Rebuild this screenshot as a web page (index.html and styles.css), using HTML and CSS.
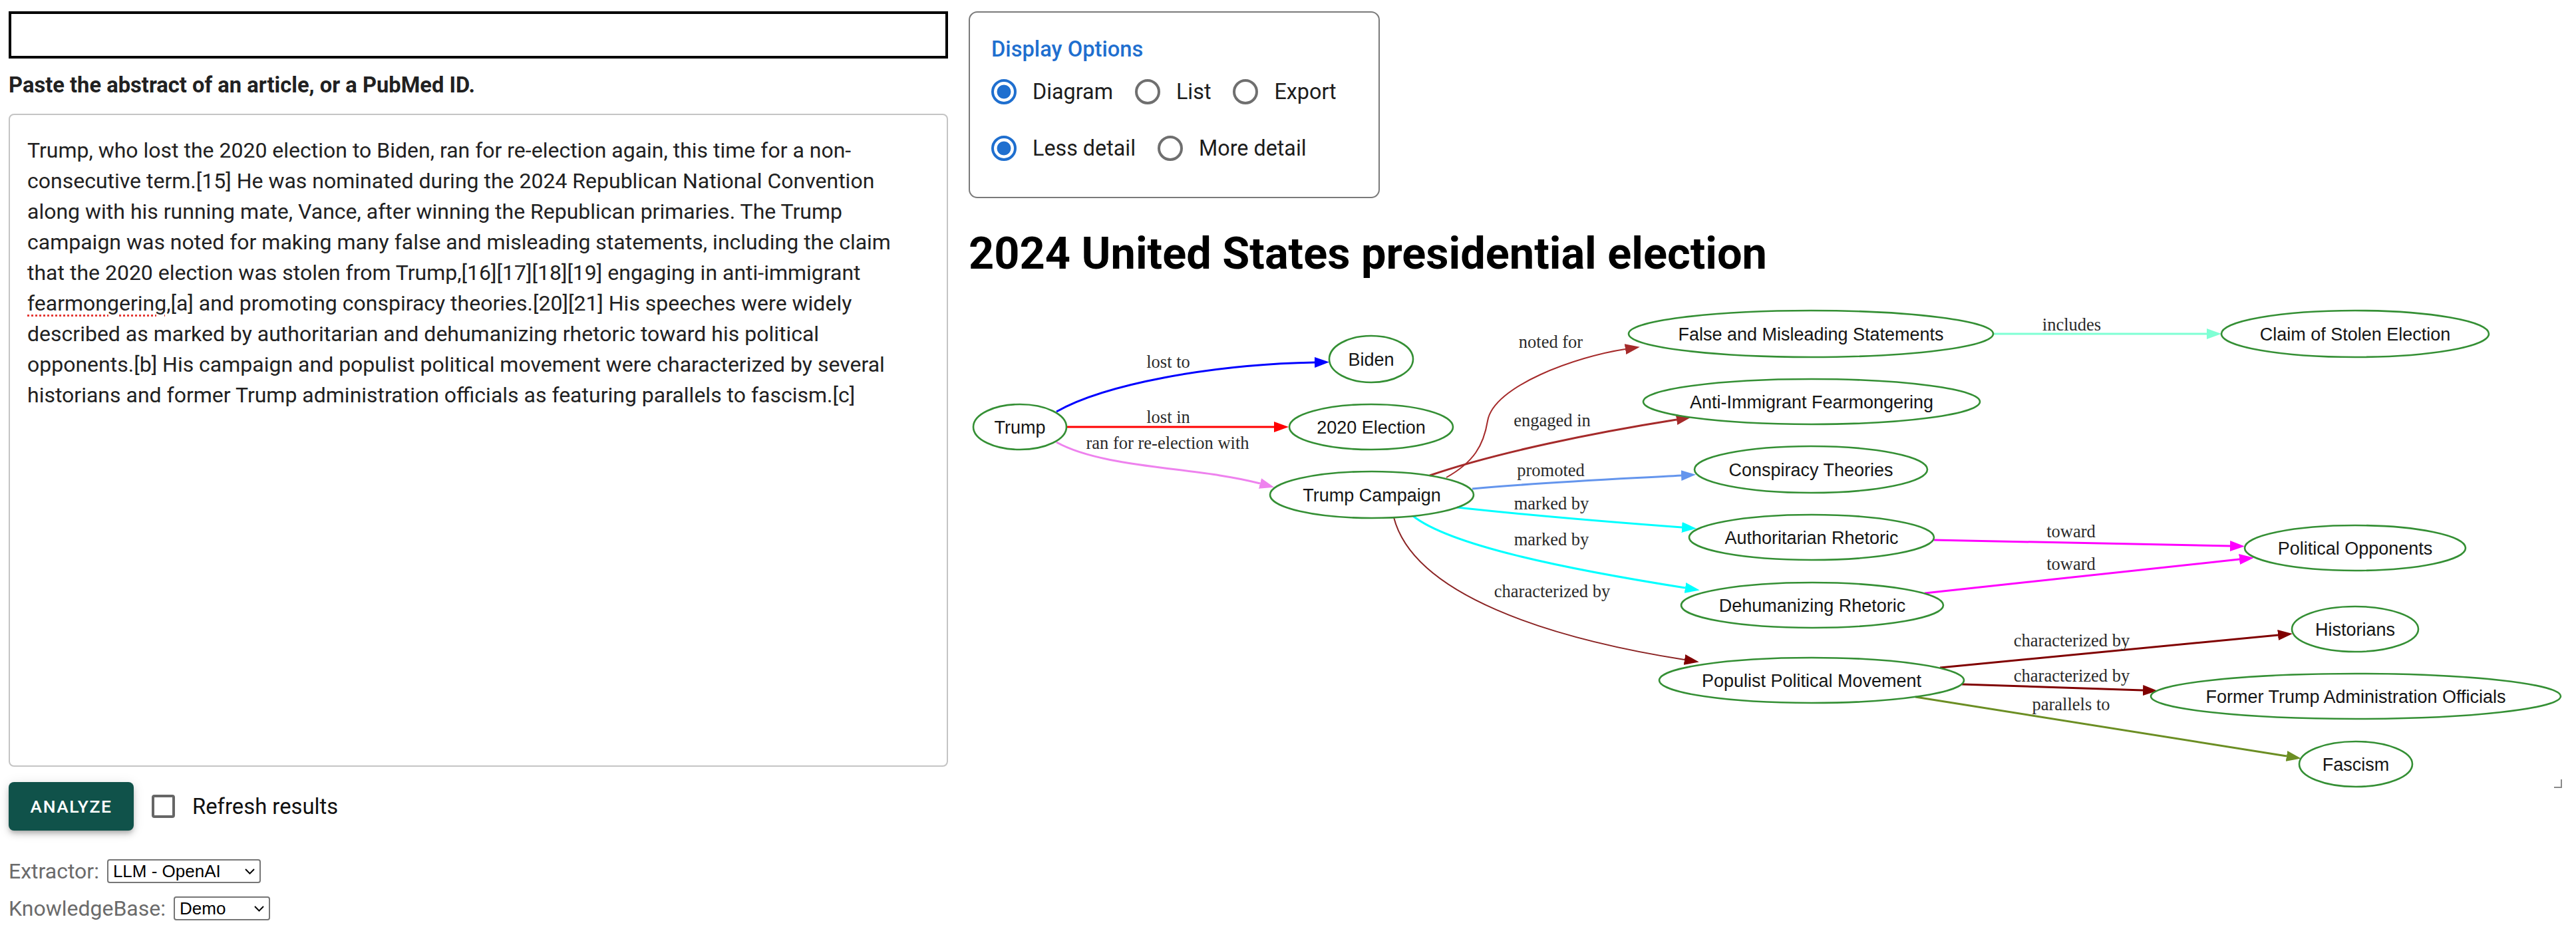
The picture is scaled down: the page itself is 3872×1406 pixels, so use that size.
FILE: index.html
```html
<!DOCTYPE html>
<html lang="en">
<head>
<meta charset="utf-8">
<title>Abstract Knowledge Graph</title>
<link rel="stylesheet" href="styles.css">
</head>
<body>
<div class="page">
  <section class="left">
    <input class="query" type="text" aria-label="PubMed ID">
    <label class="prompt">Paste the abstract of an article, or a PubMed ID.</label>
    <div class="abstract">Trump, who lost the 2020 election to Biden, ran for re-election again, this time for a non-consecutive term.[15] He was nominated during the 2024 Republican National Convention along with his running mate, Vance, after winning the Republican primaries. The Trump campaign was noted for making many false and misleading statements, including the claim that the 2020 election was stolen from Trump,[16][17][18][19] engaging in anti-immigrant <span class="misspelled">fearmongering</span>,[a] and promoting conspiracy theories.[20][21] His speeches were widely described as marked by authoritarian and dehumanizing rhetoric toward his political opponents.[b] His campaign and populist political movement were characterized by several historians and former Trump administration officials as featuring parallels to fascism.[c]</div>
    <div class="actions">
      <button class="analyze" type="button">ANALYZE</button>
      <label class="check"><input class="checkbox" type="checkbox">Refresh results</label>
    </div>
    <div class="field">
      <span class="field-label">Extractor:</span>
      <span class="select-wrap">
        <select class="select select-extractor"><option>LLM - OpenAI</option></select>
        <svg class="chev" width="15" height="9" viewBox="0 0 15 9"><path d="M1 1 L7.5 7.6 L14 1" fill="none" stroke="#000" stroke-width="2"/></svg>
      </span>
    </div>
    <div class="field field-kb">
      <span class="field-label">KnowledgeBase:</span>
      <span class="select-wrap">
        <select class="select select-kb"><option>Demo</option></select>
        <svg class="chev" width="15" height="9" viewBox="0 0 15 9"><path d="M1 1 L7.5 7.6 L14 1" fill="none" stroke="#000" stroke-width="2"/></svg>
      </span>
    </div>
  </section>

  <section class="right">
    <div class="options">
      <div class="options-title">Display Options</div>
      <div class="radio-row">
        <label class="radio-item"><input class="radio" type="radio" name="view" checked>Diagram</label>
        <label class="radio-item"><input class="radio" type="radio" name="view">List</label>
        <label class="radio-item"><input class="radio" type="radio" name="view">Export</label>
      </div>
      <div class="radio-row row-two">
        <label class="radio-item"><input class="radio" type="radio" name="detail" checked>Less detail</label>
        <label class="radio-item"><input class="radio" type="radio" name="detail">More detail</label>
      </div>
    </div>

    <h2 class="title">2024 United States presidential election</h2>

    <div class="graph">
      <svg class="graph-svg" width="2403" height="760" viewBox="1456 440 2403 760">
        <defs>
          <marker id="a-blue" viewBox="0 0 22 16" refX="0" refY="8" markerWidth="22" markerHeight="16" markerUnits="userSpaceOnUse" orient="auto"><path d="M0 0 L22 8 L0 16 Z" fill="#0000ff"/></marker>
          <marker id="a-red" viewBox="0 0 22 16" refX="0" refY="8" markerWidth="22" markerHeight="16" markerUnits="userSpaceOnUse" orient="auto"><path d="M0 0 L22 8 L0 16 Z" fill="#ff0000"/></marker>
          <marker id="a-violet" viewBox="0 0 22 16" refX="0" refY="8" markerWidth="22" markerHeight="16" markerUnits="userSpaceOnUse" orient="auto"><path d="M0 0 L22 8 L0 16 Z" fill="#ee82ee"/></marker>
          <marker id="a-brown" viewBox="0 0 22 16" refX="0" refY="8" markerWidth="22" markerHeight="16" markerUnits="userSpaceOnUse" orient="auto"><path d="M0 0 L22 8 L0 16 Z" fill="#a52a2a"/></marker>
          <marker id="a-corn" viewBox="0 0 22 16" refX="0" refY="8" markerWidth="22" markerHeight="16" markerUnits="userSpaceOnUse" orient="auto"><path d="M0 0 L22 8 L0 16 Z" fill="#6495ed"/></marker>
          <marker id="a-cyan" viewBox="0 0 22 16" refX="0" refY="8" markerWidth="22" markerHeight="16" markerUnits="userSpaceOnUse" orient="auto"><path d="M0 0 L22 8 L0 16 Z" fill="#00ffff"/></marker>
          <marker id="a-aqua" viewBox="0 0 22 16" refX="0" refY="8" markerWidth="22" markerHeight="16" markerUnits="userSpaceOnUse" orient="auto"><path d="M0 0 L22 8 L0 16 Z" fill="#7fffd4"/></marker>
          <marker id="a-magenta" viewBox="0 0 22 16" refX="0" refY="8" markerWidth="22" markerHeight="16" markerUnits="userSpaceOnUse" orient="auto"><path d="M0 0 L22 8 L0 16 Z" fill="#ff00ff"/></marker>
          <marker id="a-maroon" viewBox="0 0 22 16" refX="0" refY="8" markerWidth="22" markerHeight="16" markerUnits="userSpaceOnUse" orient="auto"><path d="M0 0 L22 8 L0 16 Z" fill="#800000"/></marker>
          <marker id="a-olive" viewBox="0 0 22 16" refX="0" refY="8" markerWidth="22" markerHeight="16" markerUnits="userSpaceOnUse" orient="auto"><path d="M0 0 L22 8 L0 16 Z" fill="#6b8e23"/></marker>
        </defs>

        <!-- edges -->
        <path class="edge" stroke="#0000ff" marker-end="url(#a-blue)" d="M1588 619 C1660 578 1820 548 1976 545"/>
        <path class="edge" stroke="#ff0000" marker-end="url(#a-red)" d="M1603 642 L1915 642"/>
        <path class="edge" stroke="#ee82ee" marker-end="url(#a-violet)" d="M1588 665 C1660 705 1800 702 1894 727"/>
        <path class="edge thin" stroke="#a52a2a" marker-end="url(#a-brown)" d="M2174 718 C2215 695 2230 670 2236 633 C2245 580 2370 536 2443 525"/>
        <path class="edge" stroke="#a52a2a" marker-end="url(#a-brown)" d="M2149 715 C2250 680 2400 650 2520 631"/>
        <path class="edge" stroke="#6495ed" marker-end="url(#a-corn)" d="M2213 735 C2320 725 2440 720 2527 715"/>
        <path class="edge" stroke="#00ffff" marker-end="url(#a-cyan)" d="M2190 763 C2300 775 2420 785 2528 793"/>
        <path class="edge" stroke="#00ffff" marker-end="url(#a-cyan)" d="M2124 776 C2180 820 2350 855 2533 884"/>
        <path class="edge thin" stroke="#8b2323" marker-end="url(#a-maroon)" d="M2095 778 C2125 895 2330 960 2532 992"/>
        <path class="edge" stroke="#7fffd4" marker-end="url(#a-aqua)" d="M2996 502 L3317 502"/>
        <path class="edge" stroke="#ff00ff" marker-end="url(#a-magenta)" d="M2907 812 C3050 815 3200 818 3352 821"/>
        <path class="edge" stroke="#ff00ff" marker-end="url(#a-magenta)" d="M2893 892 L3366 841"/>
        <path class="edge" stroke="#800000" marker-end="url(#a-maroon)" d="M2916 1004 L3424 955"/>
        <path class="edge" stroke="#800000" marker-end="url(#a-maroon)" d="M2949 1029 L3221 1038"/>
        <path class="edge" stroke="#6b8e23" marker-end="url(#a-olive)" d="M2879 1048 L3437 1137"/>

        <!-- edge labels -->
        <text class="elabel" x="1756" y="553">lost to</text>
        <text class="elabel" x="1756" y="636">lost in</text>
        <text class="elabel" x="1755" y="675">ran for re-election with</text>
        <text class="elabel" x="2331" y="523">noted for</text>
        <text class="elabel" x="2333" y="641">engaged in</text>
        <text class="elabel" x="2331" y="716">promoted</text>
        <text class="elabel" x="2332" y="766">marked by</text>
        <text class="elabel" x="2332" y="820">marked by</text>
        <text class="elabel" x="2333" y="898">characterized by</text>
        <text class="elabel" x="3114" y="497">includes</text>
        <text class="elabel" x="3113" y="808">toward</text>
        <text class="elabel" x="3113" y="857">toward</text>
        <text class="elabel" x="3114" y="972">characterized by</text>
        <text class="elabel" x="3114" y="1025">characterized by</text>
        <text class="elabel" x="3113" y="1068">parallels to</text>

        <!-- nodes -->
        <ellipse class="node" cx="1533" cy="642" rx="70" ry="34"/>
        <text class="nlabel" x="1533" y="652">Trump</text>
        <ellipse class="node" cx="2061" cy="540" rx="63" ry="35"/>
        <text class="nlabel" x="2061" y="550">Biden</text>
        <ellipse class="node" cx="2061" cy="642" rx="123" ry="34"/>
        <text class="nlabel" x="2061" y="652">2020 Election</text>
        <ellipse class="node" cx="2062" cy="744" rx="153" ry="35"/>
        <text class="nlabel" x="2062" y="754">Trump Campaign</text>
        <ellipse class="node" cx="2722" cy="502" rx="274" ry="35"/>
        <text class="nlabel" x="2722" y="512">False and Misleading Statements</text>
        <ellipse class="node" cx="3540" cy="502" rx="201" ry="35"/>
        <text class="nlabel" x="3540" y="512">Claim of Stolen Election</text>
        <ellipse class="node" cx="2723" cy="604" rx="253" ry="34"/>
        <text class="nlabel" x="2723" y="614">Anti-Immigrant Fearmongering</text>
        <ellipse class="node" cx="2722" cy="706" rx="175" ry="35"/>
        <text class="nlabel" x="2722" y="716">Conspiracy Theories</text>
        <ellipse class="node" cx="2723" cy="808" rx="184" ry="34"/>
        <text class="nlabel" x="2723" y="818">Authoritarian Rhetoric</text>
        <ellipse class="node" cx="3540" cy="824" rx="166" ry="34"/>
        <text class="nlabel" x="3540" y="834">Political Opponents</text>
        <ellipse class="node" cx="2724" cy="910" rx="197" ry="34"/>
        <text class="nlabel" x="2724" y="920">Dehumanizing Rhetoric</text>
        <ellipse class="node" cx="3540" cy="946" rx="95" ry="34"/>
        <text class="nlabel" x="3540" y="956">Historians</text>
        <ellipse class="node" cx="2723" cy="1023" rx="229" ry="34"/>
        <text class="nlabel" x="2723" y="1033">Populist Political Movement</text>
        <ellipse class="node" cx="3541" cy="1047" rx="308" ry="34"/>
        <text class="nlabel" x="3541" y="1057">Former Trump Administration Officials</text>
        <ellipse class="node" cx="3541" cy="1149" rx="85" ry="34"/>
        <text class="nlabel" x="3541" y="1159">Fascism</text>

        <!-- resize grip -->
        <path d="M3850 1172 V1184 H3839" fill="none" stroke="#8a8a8a" stroke-width="2"/>
      </svg>
    </div>
  </section>
</div>
</body>
</html>
```

FILE: styles.css
```css
* { box-sizing: border-box; }

html, body {
  margin: 0;
  background: #ffffff;
}

body {
  font-family: Roboto, "Noto Sans", "Liberation Sans", sans-serif;
  color: #212121;
}

.page {
  display: flex;
  align-items: flex-start;
  gap: 31px;
  padding: 17px 13px 0 13px;
}

/* ---------- left column ---------- */
.left {
  width: 1412px;
  flex: none;
  display: flex;
  flex-direction: column;
}

.query {
  display: block;
  width: 100%;
  height: 71px;
  border: 4px solid #000;
  border-radius: 0;
  margin: 0;
  padding: 0 12px;
  font: 31px Roboto, sans-serif;
  background: #fff;
  outline: none;
}

.prompt {
  display: block;
  margin: 22px 0 24px 0;
  font-size: 32.7px;
  line-height: 37px;
  font-weight: 700;
  color: #212121;
}

.abstract {
  height: 982px;
  border: 2px solid #c4c4c4;
  border-radius: 8px;
  padding: 30px 26px;
  font-size: 32px;
  line-height: 46px;
  color: #212121;
  background: #fff;
}

.misspelled {
  text-decoration: underline dotted #e53935;
  text-decoration-thickness: 3px;
  text-underline-offset: 6px;
}

.actions {
  display: flex;
  align-items: center;
  margin-top: 23px;
}

.analyze {
  width: 188px;
  height: 73px;
  border: none;
  border-radius: 8px;
  background: #10524a;
  color: #fff;
  font-family: Roboto, sans-serif;
  font-size: 26.5px;
  font-weight: 500;
  letter-spacing: 1.5px;
  padding: 0;
  box-shadow: 0 5px 6px -3px rgba(0,0,0,.2), 0 6px 10px 0 rgba(0,0,0,.14), 0 2px 18px 0 rgba(0,0,0,.10);
}

.check {
  display: flex;
  align-items: center;
  margin-left: 27px;
  font-size: 32.8px;
  color: #111;
}

.checkbox {
  appearance: none;
  -webkit-appearance: none;
  width: 35px;
  height: 35px;
  margin: 0 26px 0 0;
  border: 4px solid #666;
  border-radius: 4px;
  background: #fff;
}

.field {
  display: flex;
  align-items: center;
  gap: 12px;
  height: 36px;
  margin-top: 43px;
}

.field-kb {
  margin-top: 20px;
}

.field-label {
  font-size: 32px;
  color: #6b6b6b;
}

.select-wrap {
  position: relative;
  display: inline-flex;
}

.select {
  appearance: none;
  -webkit-appearance: none;
  height: 36px;
  border: 2px solid #767676;
  border-radius: 4px;
  background: #fff;
  color: #000;
  font-family: "Liberation Sans", Arial, sans-serif;
  font-size: 26px;
  padding: 0 30px 0 7px;
  margin: 0;
}

.select-extractor { width: 231px; }
.select-kb { width: 145px; }

.chev {
  position: absolute;
  right: 9px;
  top: 14px;
  pointer-events: none;
}

/* ---------- right column ---------- */
.right {
  flex: 1;
  min-width: 0;
}

.options {
  width: 618px;
  border: 2px solid #7a7a7a;
  border-radius: 13px;
  padding: 37px 20px 45px 32px;
}

.options-title {
  font-size: 32.7px;
  line-height: 37px;
  font-weight: 500;
  color: #1f6fcf;
}

.radio-row {
  display: flex;
  align-items: center;
  height: 56px;
  margin-top: 17px;
}

.radio-row.row-two {
  margin-top: 29px;
}

.radio-item {
  display: flex;
  align-items: center;
  gap: 24px;
  margin-right: 33px;
  font-size: 32.3px;
  color: #1c1c1c;
}

.radio {
  appearance: none;
  -webkit-appearance: none;
  width: 38px;
  height: 38px;
  margin: 0;
  border: 4px solid #6f6f6f;
  border-radius: 50%;
  background: #fff;
}

.radio:checked {
  border-color: #1f6fcf;
  background: radial-gradient(circle, #1f6fcf 0 10px, #fff 10.8px);
}

.title {
  margin: 43px 0 0 0;
  font-size: 66.7px;
  line-height: 80px;
  font-weight: 700;
  color: #000;
}

.graph {
  margin-top: 19px;
}

.graph-svg {
  display: block;
}

.edge {
  fill: none;
  stroke-width: 3;
}

.edge.thin {
  stroke-width: 2;
}

.node {
  fill: none;
  stroke: #348f34;
  stroke-width: 2.6;
}

.nlabel {
  font-family: "Liberation Sans", Arial, sans-serif;
  font-size: 27px;
  fill: #151515;
  text-anchor: middle;
}

.elabel {
  font-family: "Liberation Serif", "Times New Roman", serif;
  font-size: 26.5px;
  fill: #2a2a2a;
  text-anchor: middle;
}
```
